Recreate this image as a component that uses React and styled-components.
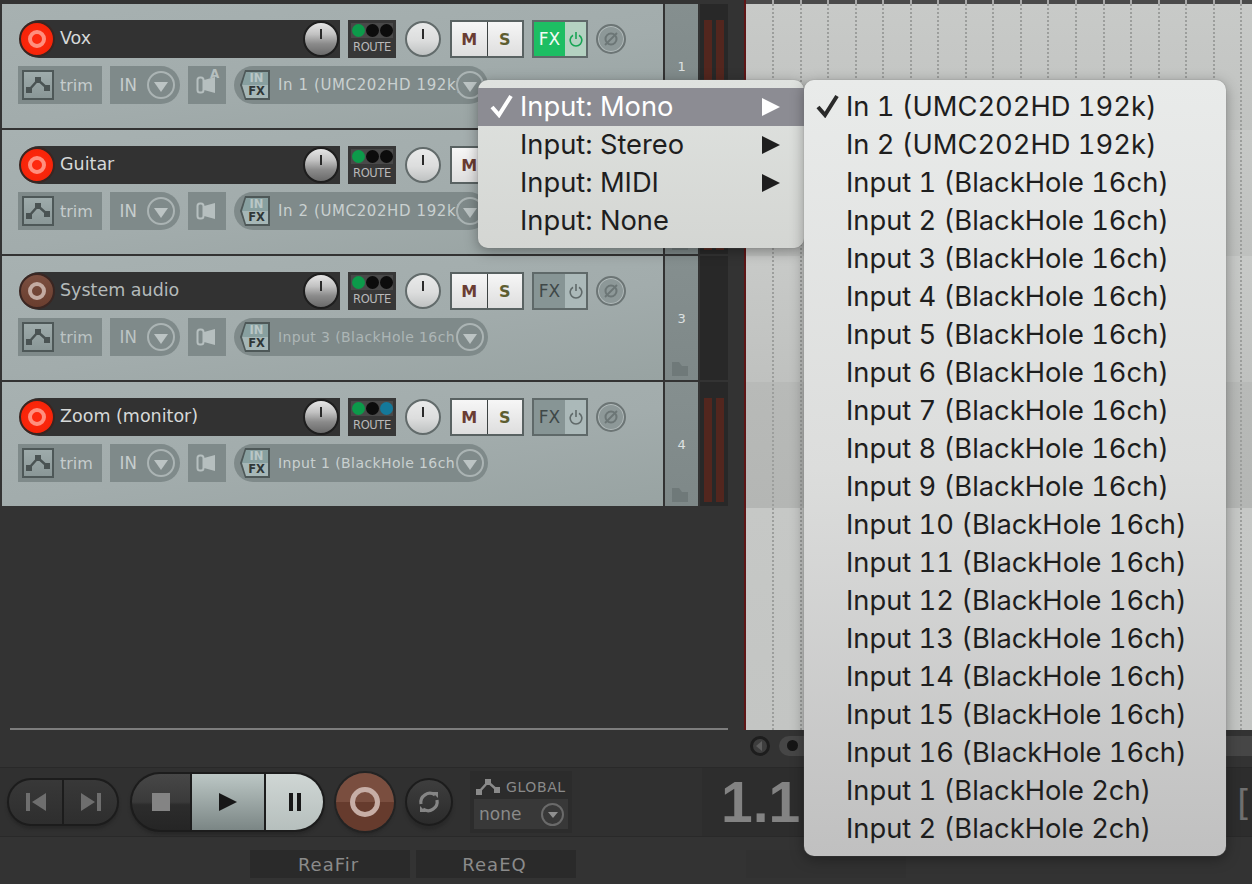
import React from "react";
import styled, { createGlobalStyle } from "styled-components";

const GlobalStyle = createGlobalStyle`
  html, body { margin: 0; padding: 0; background: #333; }
  *, *::before, *::after { box-sizing: border-box; }
`;

const UI_FONT = `"DejaVu Sans", sans-serif`;

// PAGE
const Page = styled.div`
  position: relative;
  width: 1252px;
  height: 884px;
  overflow: hidden;
  background: #333;
  font-family: ${UI_FONT};
`;

const Main = styled.div`
  display: flex;
  height: 730px;
`;

const TrackPane = styled.div`
  width: 746px;
  display: flex;
  flex-direction: column;
  gap: 2px;
  padding: 4px 0 0 2px;
  border-right: 2px solid #5e1616;
`;

const PaneDivider = styled.div`
  margin: auto 16px 0 8px;
  height: 2px;
  background: #7d7d7d;
`;

// TRACKS
const TrackRow = styled.div`
  display: flex;
  width: 726px;
  height: 124px;
  gap: 2px;
`;

const TrackBody = styled.div`
  width: 663px;
  padding: 16px 0 0 16px;
  background: linear-gradient(172deg, #a7b1b1 0%, #a2acac 55%, #98a3a2 100%);
`;

const Line = styled.div`
  display: flex;
  align-items: center;
  gap: 8px;
  height: 38px;
  margin-bottom: 8px;
`;

const NameBar = styled.div`
  display: flex;
  align-items: center;
  width: 320px;
  height: 38px;
  margin-left: 2px;
  padding-right: 1px;
  background: #323232;
  border-radius: 19px 0 0 19px;
`;

const ArmButton = styled.div`
  flex: none;
  display: flex;
  align-items: center;
  justify-content: center;
  width: 36px;
  height: 36px;
  margin-left: -1px;
  border-radius: 50%;
  border: 2px solid #3a2622;
  background: ${(p) =>
    p.$on
      ? "radial-gradient(circle, #ff2a10 0%, #f72408 70%, #c81e08 100%)"
      : "linear-gradient(#7b4f40, #6a3e2f)"};
  &::after {
    content: "";
    width: 18px;
    height: 18px;
    border-radius: 50%;
    border: 4px solid ${(p) => (p.$on ? "#ff8f7e" : "#c3aba2")};
  }
`;

const TrackName = styled.span`
  flex: 1;
  margin-top: -2px;
  padding-left: 5px;
  color: ${(p) => (p.$dim ? "#b4baba" : "#d6d9d9")};
  font-size: 17.5px;
  white-space: nowrap;
`;

const VolumeKnob = styled.div`
  position: relative;
  flex: none;
  width: 36px;
  height: 36px;
  border-radius: 50%;
  border: 2px solid #1e1e1e;
  background: linear-gradient(#e6e6e6 0%, #c2c2c2 35%, #8b8b8b 65%, #6a6a6a 100%);
  &::after {
    content: "";
    position: absolute;
    top: 6px;
    left: 15px;
    width: 2px;
    height: 10px;
    background: #2a2a2a;
  }
`;

const PanKnob = styled(VolumeKnob)`
  margin: 0 1px;
  border-color: #626b6b;
  background: linear-gradient(#e9eaea 0%, #dcdddd 55%, #bfc2c2 100%);
`;

const RouteBox = styled.div`
  flex: none;
  width: 48px;
  height: 38px;
  padding: 3px 3px 0;
  background: #373737;
  color: #b9b9b9;
  font-size: 11.5px;
  text-align: center;
  letter-spacing: -0.4px;
`;

const Leds = styled.div`
  display: flex;
  justify-content: center;
  gap: 1px;
  height: 15px;
  padding-top: 1px;
  margin-bottom: 2px;
  background: #494949;
`;

const Led = styled.i`
  display: block;
  width: 13px;
  height: 13px;
  border-radius: 50%;
  background: ${(p) => p.$color || "#0c0c0c"};
`;

const MuteSolo = styled.div`
  display: flex;
  width: 74px;
  height: 38px;
  border: 2px solid #596262;
  gap: 1px;
  background: #3c4242;
`;

const MsButton = styled.div`
  flex: 1;
  display: flex;
  align-items: center;
  justify-content: center;
  background: linear-gradient(#f6f6f6, #dedede);
  color: ${(p) => p.$color};
  font-size: 16px;
  font-weight: 700;
`;

const FxGroup = styled.div`
  display: flex;
  width: 56px;
  height: 38px;
  border: 2px solid #5f6969;
`;

const FxLabel = styled.div`
  width: 31px;
  display: flex;
  align-items: center;
  justify-content: center;
  background: ${(p) => (p.$on ? "#1dbe63" : "#879595")};
  color: ${(p) => (p.$on ? "#f2fbf5" : "#3f4848")};
  font-size: 17px;
`;

const FxPower = styled.div`
  flex: 1;
  display: flex;
  align-items: center;
  justify-content: center;
  background: ${(p) => (p.$on ? "#b4d2c1" : "#abb9b9")};
  color: ${(p) => (p.$on ? "#17a454" : "#606a6a")};
`;

const PhaseButton = styled.div`
  display: flex;
  align-items: center;
  justify-content: center;
  width: 30px;
  height: 30px;
  border-radius: 50%;
  border: 2px solid #6c7575;
  box-shadow: inset 0 0 0 1px #b3bcbc;
  background: #8d9898;
  color: #6c7676;
`;

const ChipBox = styled.div`
  display: flex;
  align-items: center;
  height: 38px;
  width: ${(p) => p.$w}px;
  background: #7f8a8a;
  color: ${(p) => (p.$dim ? "#bcc4c4" : "#c6cdcd")};
  font-size: 16px;
  border-radius: ${(p) => p.$radius || "0"};
`;

const TrimIcon = styled.div`
  flex: none;
  width: 32px;
  height: 30px;
  margin: 0 6px 0 4px;
  border: 2px solid #4e5858;
  background: linear-gradient(#9eabab, #8a9797);
  display: flex;
  align-items: center;
  justify-content: center;
`;

const InLabel = styled.span`
  padding-left: 10px;
  width: 39px;
  font-size: 17.5px;
  transform: scaleX(0.95);
  transform-origin: left;
`;

const DropCircle = styled.span`
  flex: none;
  display: flex;
  align-items: center;
  justify-content: center;
  width: 28px;
  height: 28px;
  border-radius: 50%;
  border: 2px solid #abb4b4;
  background: #7f8a8a;
  margin-left: ${(p) => p.$left || 0}px;
  margin-right: ${(p) => p.$right || 0}px;
  &::after {
    content: "";
    width: 0;
    height: 0;
    margin-top: 3px;
    border-left: 7px solid transparent;
    border-right: 7px solid transparent;
    border-top: 10px solid #bcc4c4;
  }
`;

const FxBadgeFrame = styled.div`
  flex: none;
  width: 30px;
  height: 30px;
  margin-left: 6px;
  padding: 2px;
  background: #4e5858;
  clip-path: polygon(5px 0, 100% 0, 100% 100%, 5px 100%, 0 50%);
`;

const FxBadgeInner = styled.div`
  height: 100%;
  display: flex;
  flex-direction: column;
  align-items: center;
  padding-left: 3px;
  line-height: 13px;
  font-size: 11.5px;
  font-weight: 700;
  background: linear-gradient(#88a0a0 0 50%, #a6b7b7 50% 100%);
  clip-path: polygon(4px 0, 100% 0, 100% 100%, 4px 100%, 0 50%);
`;

const BadgeIn = styled.span`
  color: #b9c6c6;
`;

const BadgeFx = styled.span`
  color: #2f3737;
`;

const InputName = styled.span`
  flex: 1;
  min-width: 0;
  padding-left: 8px;
  white-space: nowrap;
  font-size: ${(p) => (p.$wide ? 15 : 14)}px;
  letter-spacing: ${(p) => (p.$wide ? 0.6 : 0.4)}px;
  color: ${(p) => (p.$dim ? "#adb6b6" : "#c9d0d0")};
`;

const NumberCol = styled.div`
  position: relative;
  width: 33px;
  display: flex;
  align-items: center;
  justify-content: center;
  background: linear-gradient(#858f8f, #7e8888);
  color: #dde1e1;
  font-size: 13px;
`;

const FolderMark = styled.svg`
  position: absolute;
  right: 10px;
  bottom: 4px;
`;

const MeterCol = styled.div`
  width: 28px;
  display: flex;
  gap: 4px;
  padding: 16px 4px 4px;
  background: #282828;
`;

const MeterBar = styled.div`
  width: 8px;
  background: #53261e;
`;

// ARRANGE
const Arrange = styled.div`
  position: relative;
  flex: 1;
  display: flex;
  flex-direction: column;
  padding-top: 4px;
  background: #4a4a4a;
`;

const Lane = styled.div`
  height: ${(p) => p.$h}px;
  flex: ${(p) => (p.$fill ? 1 : "none")};
  background: ${(p) => p.$bg};
`;

const GridOverlay = styled.div`
  position: absolute;
  inset: 0;
  display: flex;
  padding-left: 26px;
  overflow: hidden;
`;

const GridLine = styled.div`
  flex: none;
  position: relative;
  width: 27.55px;
  border-left: 2px dotted #9c9e9c;
  &::before {
    content: "";
    position: absolute;
    top: 0;
    left: -2px;
    width: 2px;
    height: 4px;
    background: #a9a9a9;
  }
`;

const ScrollRow = styled.div`
  display: flex;
  align-items: center;
  height: 37px;
  padding: 0 0 6px 746px;
`;

const ScrollArrow = styled.div`
  width: 20px;
  height: 20px;
  margin-left: 4px;
  border-radius: 50%;
  border: 3px solid #1d1d1d;
  background: #3e3e3e;
  display: flex;
  align-items: center;
  justify-content: center;
  &::after {
    content: "";
    margin-right: 3px;
    border-top: 5px solid transparent;
    border-bottom: 5px solid transparent;
    border-right: 6px solid #5e5e5e;
  }
`;

const ScrollTrack = styled.div`
  flex: 1;
  height: 20px;
  margin-left: 9px;
  display: flex;
  align-items: center;
  padding-left: 8px;
  background: #464646;
  border-radius: 10px 0 0 10px;
`;

const ScrollDot = styled.div`
  width: 11px;
  height: 11px;
  border-radius: 50%;
  background: #161616;
`;

// TRANSPORT
const Transport = styled.div`
  display: flex;
  align-items: center;
  height: 70px;
  padding-left: 7px;
  background: #303030;
  border-top: 1px solid #292929;
  border-bottom: 1px solid #292929;
`;

const Pill = styled.div`
  display: flex;
  flex: none;
  overflow: hidden;
  height: ${(p) => p.$h}px;
  width: ${(p) => p.$w}px;
  margin-right: ${(p) => p.$mr}px;
  border-radius: ${(p) => p.$h / 2}px;
  border: 2px solid #1c1c1c;
  gap: 2px;
  background: #1c1c1c;
  box-shadow: 0 3px 3px #282828;
`;

const PillButton = styled.div`
  display: flex;
  align-items: center;
  justify-content: center;
  flex: ${(p) => (p.$w ? "none" : 1)};
  width: ${(p) => p.$w || 0}px;
  background: ${(p) => p.$bg || "linear-gradient(#383838, #2e2e2e)"};
`;

const RecButton = styled.div`
  flex: none;
  width: 58px;
  height: 58px;
  margin-right: 11px;
  display: flex;
  align-items: center;
  justify-content: center;
  border-radius: 50%;
  background: linear-gradient(#7a4e3f 0 50%, #663b2d 50% 100%);
  box-shadow: 0 0 0 2px #232323, 0 4px 3px #282828;
  &::after {
    content: "";
    width: 30px;
    height: 30px;
    border-radius: 50%;
    border: 5px solid #c7aea6;
  }
`;

const RepeatButton = styled.div`
  flex: none;
  width: 48px;
  height: 48px;
  margin-right: 17px;
  display: flex;
  align-items: center;
  justify-content: center;
  border-radius: 50%;
  border: 2px solid #1c1c1c;
  background: linear-gradient(#3e3e3e, #2b2b2b);
  box-shadow: 0 4px 3px #292929;
`;

const GlobalBox = styled.div`
  flex: none;
  width: 102px;
  height: 62px;
  padding: 4px;
  background: #2c2c2c;
  color: #8a8a8a;
`;

const GlobalHead = styled.div`
  display: flex;
  align-items: center;
  gap: 6px;
  height: 24px;
  padding-left: 2px;
  font-size: 14px;
  letter-spacing: 0.6px;
`;

const GlobalSelect = styled.div`
  display: flex;
  align-items: center;
  justify-content: space-between;
  height: 30px;
  padding: 0 4px 0 5px;
  background: #383838;
  font-size: 17px;
`;

const MiniCircle = styled.span`
  display: flex;
  align-items: center;
  justify-content: center;
  width: 23px;
  height: 23px;
  border-radius: 50%;
  border: 2px solid #6a6a6a;
  &::after {
    content: "";
    margin-top: 2px;
    border-left: 5px solid transparent;
    border-right: 5px solid transparent;
    border-top: 6px solid #8f8f8f;
  }
`;

const TimeBox = styled.div`
  flex: 1;
  align-self: stretch;
  display: flex;
  align-items: center;
  justify-content: space-between;
  margin-left: 130px;
  padding-left: 19px;
  overflow: hidden;
  background: #2d2d2d;
  color: #838383;
`;

const TimeValue = styled.span`
  font-family: "Liberation Sans", sans-serif;
  font-weight: 700;
  font-size: 57px;
  white-space: nowrap;
`;

const TimeMode = styled.span`
  margin-right: -22px;
  font-size: 36px;
  color: #6f6f6f;
  white-space: nowrap;
`;

// FX BAR
const FxBar = styled.div`
  display: flex;
  gap: 6px;
  padding: 13px 0 0 250px;
`;

const FxSlot = styled.div`
  width: ${(p) => p.$w || 160}px;
  margin-left: ${(p) => p.$left || 0}px;
  height: 28px;
  display: flex;
  align-items: center;
  justify-content: center;
  padding-right: 3px;
  background: ${(p) => p.$bg || "#2a2a2a"};
  color: #8b8b8b;
  font-size: 18px;
  letter-spacing: 1px;
`;

// MENUS
const Menu = styled.div`
  position: absolute;
  top: 80px;
  left: ${(p) => p.$left}px;
  width: ${(p) => p.$w}px;
  padding: 8px 0;
  border-radius: 10px;
  background: ${(p) => p.$bg};
  box-shadow: 0 0 1px #777, 0 3px 14px rgba(0, 0, 0, 0.35);
  font-family: Inter, "Liberation Sans", sans-serif;
  font-size: 27.3px;
  font-feature-settings: "tnum";
  color: #1e1e1e;
`;

const MenuItem = styled.div`
  position: relative;
  height: 38px;
  line-height: 38px;
  padding-left: 42px;
  white-space: nowrap;
  background: ${(p) => (p.$active ? "#8c8c93" : "transparent")};
  color: ${(p) => (p.$active ? "#fff" : "inherit")};
`;

const MenuCheck = styled.svg`
  position: absolute;
  left: 12px;
  top: 6px;
`;

const MenuArrow = styled.svg`
  position: absolute;
  right: 24px;
  top: 10px;
`;

// ICONS
const PeakIcon = ({ color = "#4a5353", w = 24, h = 18 }) => (
  <svg width={w} height={h} viewBox="0 0 24 18">
    <path d="M3 14 L12 4 L21 12" fill="none" stroke={color} strokeWidth="2.4" />
    <rect x="0" y="11" width="6" height="6" fill={color} />
    <rect x="9" y="1" width="6" height="6" fill={color} />
    <rect x="18" y="9" width="6" height="6" fill={color} />
  </svg>
);

const PowerIcon = () => (
  <svg width="14" height="16" viewBox="0 0 14 16" fill="none" stroke="currentColor" strokeWidth="1.6">
    <path d="M4 4.2 A5.8 5.8 0 1 0 10 4.2" />
    <path d="M7 1 V8" />
  </svg>
);

const PhaseIcon = () => (
  <svg width="18" height="18" viewBox="0 0 18 18" fill="none" stroke="currentColor" strokeWidth="2">
    <circle cx="9" cy="9" r="5.5" />
    <path d="M3 15 L15 3" />
  </svg>
);

const SpeakerIcon = ({ auto }) => (
  <svg width="38" height="38" viewBox="0 0 38 38">
    <rect x="9.5" y="11.5" width="6" height="15" rx="2.5" fill="none" stroke="#b6bfbf" strokeWidth="2" />
    <path d="M16 14 L27 11 V27 L16 24 Z" fill="#b6bfbf" />
    {auto && (
      <text x="22" y="12" fontSize="12" fontWeight="700" fill="#b6bfbf" fontFamily="DejaVu Sans">
        A
      </text>
    )}
  </svg>
);

const RepeatIcon = () => (
  <svg width="26" height="26" viewBox="0 0 26 26" fill="none" stroke="#858585" strokeWidth="3.2">
    <path d="M5 15 A9 9 0 0 1 19 6" />
    <path d="M21 11 A9 9 0 0 1 7 20" />
    <path d="M16 3 L22 3 L22 9 Z" fill="#858585" stroke="none" />
    <path d="M10 23 L4 23 L4 17 Z" fill="#858585" stroke="none" />
  </svg>
);

// DATA
const tracks = [
  { id: 1, name: "Vox", input: "In 1 (UMC202HD 192k)", wide: true, armed: true, meter: true, fx: true, auto: true, leds: ["#0c9a4a"] },
  { id: 2, name: "Guitar", input: "In 2 (UMC202HD 192k)", wide: true, armed: true, meter: true, leds: ["#0c9a4a"] },
  { id: 3, name: "System audio", input: "Input 3 (BlackHole 16ch", dim: true, leds: ["#0c9a4a"] },
  { id: 4, name: "Zoom (monitor)", input: "Input 1 (BlackHole 16ch", armed: true, meter: true, leds: ["#0c9a4a", null, "#14799a"] },
];

const inputOptions = [
  "In 1 (UMC202HD 192k)",
  "In 2 (UMC202HD 192k)",
  ...Array.from({ length: 16 }, (_, i) => `Input ${i + 1} (BlackHole 16ch)`),
  "Input 1 (BlackHole 2ch)",
  "Input 2 (BlackHole 2ch)",
];

const inputModes = ["Input: Mono", "Input: Stereo", "Input: MIDI", "Input: None"];

const lanes = [
  { h: 126, bg: "linear-gradient(#c8cac8, #c1c3c1)" },
  { h: 126, bg: "linear-gradient(#c7c9c7, #bfc1bf)" },
  { h: 126, bg: "linear-gradient(#c8cac8, #bfc1bf)" },
  { h: 126, bg: "linear-gradient(#b8bab8, #b4b6b4)" },
];

function Track({ track }) {
  return (
    <TrackRow>
      <TrackBody>
        <Line>
          <NameBar>
            <ArmButton $on={track.armed} />
            <TrackName $dim={track.dim}>{track.name}</TrackName>
            <VolumeKnob />
          </NameBar>
          <RouteBox>
            <Leds>
              {[0, 1, 2].map((i) => (
                <Led key={i} $color={track.leds[i]} />
              ))}
            </Leds>
            ROUTE
          </RouteBox>
          <PanKnob />
          <MuteSolo>
            <MsButton $color="#6a3d33">M</MsButton>
            <MsButton $color="#5d5d30">S</MsButton>
          </MuteSolo>
          <FxGroup>
            <FxLabel $on={track.fx}>FX</FxLabel>
            <FxPower $on={track.fx}>
              <PowerIcon />
            </FxPower>
          </FxGroup>
          <PhaseButton>
            <PhaseIcon />
          </PhaseButton>
        </Line>
        <Line>
          <ChipBox $w={84} $dim={track.dim}>
            <TrimIcon>
              <PeakIcon />
            </TrimIcon>
            trim
          </ChipBox>
          <ChipBox $w={70} $radius="0 19px 19px 0" $dim={track.dim}>
            <InLabel>IN</InLabel>
            <DropCircle $left={-2} />
          </ChipBox>
          <ChipBox $w={38}>
            <SpeakerIcon auto={track.auto} />
          </ChipBox>
          <ChipBox $w={254} $radius="19px">
            <FxBadgeFrame>
              <FxBadgeInner>
                <BadgeIn>IN</BadgeIn>
                <BadgeFx>FX</BadgeFx>
              </FxBadgeInner>
            </FxBadgeFrame>
            <InputName $dim={track.dim} $wide={track.wide}>
              {track.input}
            </InputName>
            <DropCircle $right={4} />
          </ChipBox>
        </Line>
      </TrackBody>
      <NumberCol>
        {track.id}
        <FolderMark width="16" height="14" viewBox="0 0 16 14">
          <path d="M0 0 H7 L10 4 H16 V14 H0 Z" fill="#6f7979" />
        </FolderMark>
      </NumberCol>
      <MeterCol>
        {track.meter && (
          <>
            <MeterBar />
            <MeterBar />
          </>
        )}
      </MeterCol>
    </TrackRow>
  );
}

export default function App() {
  return (
    <Page>
      <GlobalStyle />
      <Main>
        <TrackPane>
          {tracks.map((t) => (
            <Track key={t.id} track={t} />
          ))}
          <PaneDivider />
        </TrackPane>
        <Arrange>
          {lanes.map((l, i) => (
            <Lane key={i} $h={l.h} $bg={l.bg} />
          ))}
          <Lane $fill $bg="linear-gradient(#c6c8c6, #c3c5c3)" />
          <GridOverlay>
            {Array.from({ length: 18 }, (_, i) => (
              <GridLine key={i} />
            ))}
          </GridOverlay>
        </Arrange>
      </Main>

      <ScrollRow>
        <ScrollArrow />
        <ScrollTrack>
          <ScrollDot />
        </ScrollTrack>
      </ScrollRow>

      <Transport>
        <Pill $w={112} $h={48} $mr={11}>
          <PillButton>
            <svg width="20" height="18" viewBox="0 0 20 18" fill="#6e6e6e">
              <rect x="0" y="0" width="4" height="18" />
              <path d="M20 0 V18 L6 9 Z" />
            </svg>
          </PillButton>
          <PillButton>
            <svg width="20" height="18" viewBox="0 0 20 18" fill="#6e6e6e">
              <path d="M0 0 V18 L14 9 Z" />
              <rect x="16" y="0" width="4" height="18" />
            </svg>
          </PillButton>
        </Pill>
        <Pill $w={195} $h={60} $mr={11}>
          <PillButton $w={58} $bg="linear-gradient(#474747, #3a3a3a 50%, #2c2c2c 55%, #252525)">
            <svg width="18" height="18">
              <rect width="18" height="18" fill="#848484" />
            </svg>
          </PillButton>
          <PillButton $w={72} $bg="linear-gradient(#bcc7c5, #7b8685)">
            <svg width="18" height="18" viewBox="0 0 18 18">
              <path d="M0 0 L18 9 L0 18 Z" fill="#171717" />
            </svg>
          </PillButton>
          <PillButton $bg="linear-gradient(#cfd6d4, #b6bfbd)">
            <svg width="12" height="18" viewBox="0 0 12 18" fill="#171717">
              <rect x="0" y="0" width="4" height="18" />
              <rect x="8" y="0" width="4" height="18" />
            </svg>
          </PillButton>
        </Pill>
        <RecButton />
        <RepeatButton>
          <RepeatIcon />
        </RepeatButton>
        <GlobalBox>
          <GlobalHead>
            <PeakIcon color="#8a8a8a" />
            GLOBAL
          </GlobalHead>
          <GlobalSelect>
            none
            <MiniCircle />
          </GlobalSelect>
        </GlobalBox>
        <TimeBox>
          <TimeValue>1.1.</TimeValue>
          <TimeMode>[S</TimeMode>
        </TimeBox>
      </Transport>

      <FxBar>
        <FxSlot>ReaFir</FxSlot>
        <FxSlot>ReaEQ</FxSlot>
        <FxSlot $w={160} $left={164} $bg="#313131" />
      </FxBar>

      <Menu $left={478} $w={326} $bg="linear-gradient(#dfe2df, #d4d6d3)">
        {inputModes.map((label, i) => (
          <MenuItem key={label} $active={i === 0}>
            {i === 0 && (
              <MenuCheck width="24" height="24" viewBox="0 0 24 24">
                <path d="M2 13 L9 21 L21 2" fill="none" stroke="#fff" strokeWidth="4" />
              </MenuCheck>
            )}
            {label}
            {i < 3 && (
              <MenuArrow width="18" height="18" viewBox="0 0 18 18">
                <path d="M0 0 L18 9 L0 18 Z" fill={i === 0 ? "#fff" : "#1e1e1e"} />
              </MenuArrow>
            )}
          </MenuItem>
        ))}
      </Menu>

      <Menu $left={804} $w={422} $bg="linear-gradient(#e9ebea 0%, #dcdddc 50%, #c0c0c0 100%)">
        {inputOptions.map((label, i) => (
          <MenuItem key={label + i}>
            {i === 0 && (
              <MenuCheck width="24" height="24" viewBox="0 0 24 24">
                <path d="M2 13 L9 21 L21 2" fill="none" stroke="#2a2a2a" strokeWidth="4" />
              </MenuCheck>
            )}
            {label}
          </MenuItem>
        ))}
      </Menu>
    </Page>
  );
}
